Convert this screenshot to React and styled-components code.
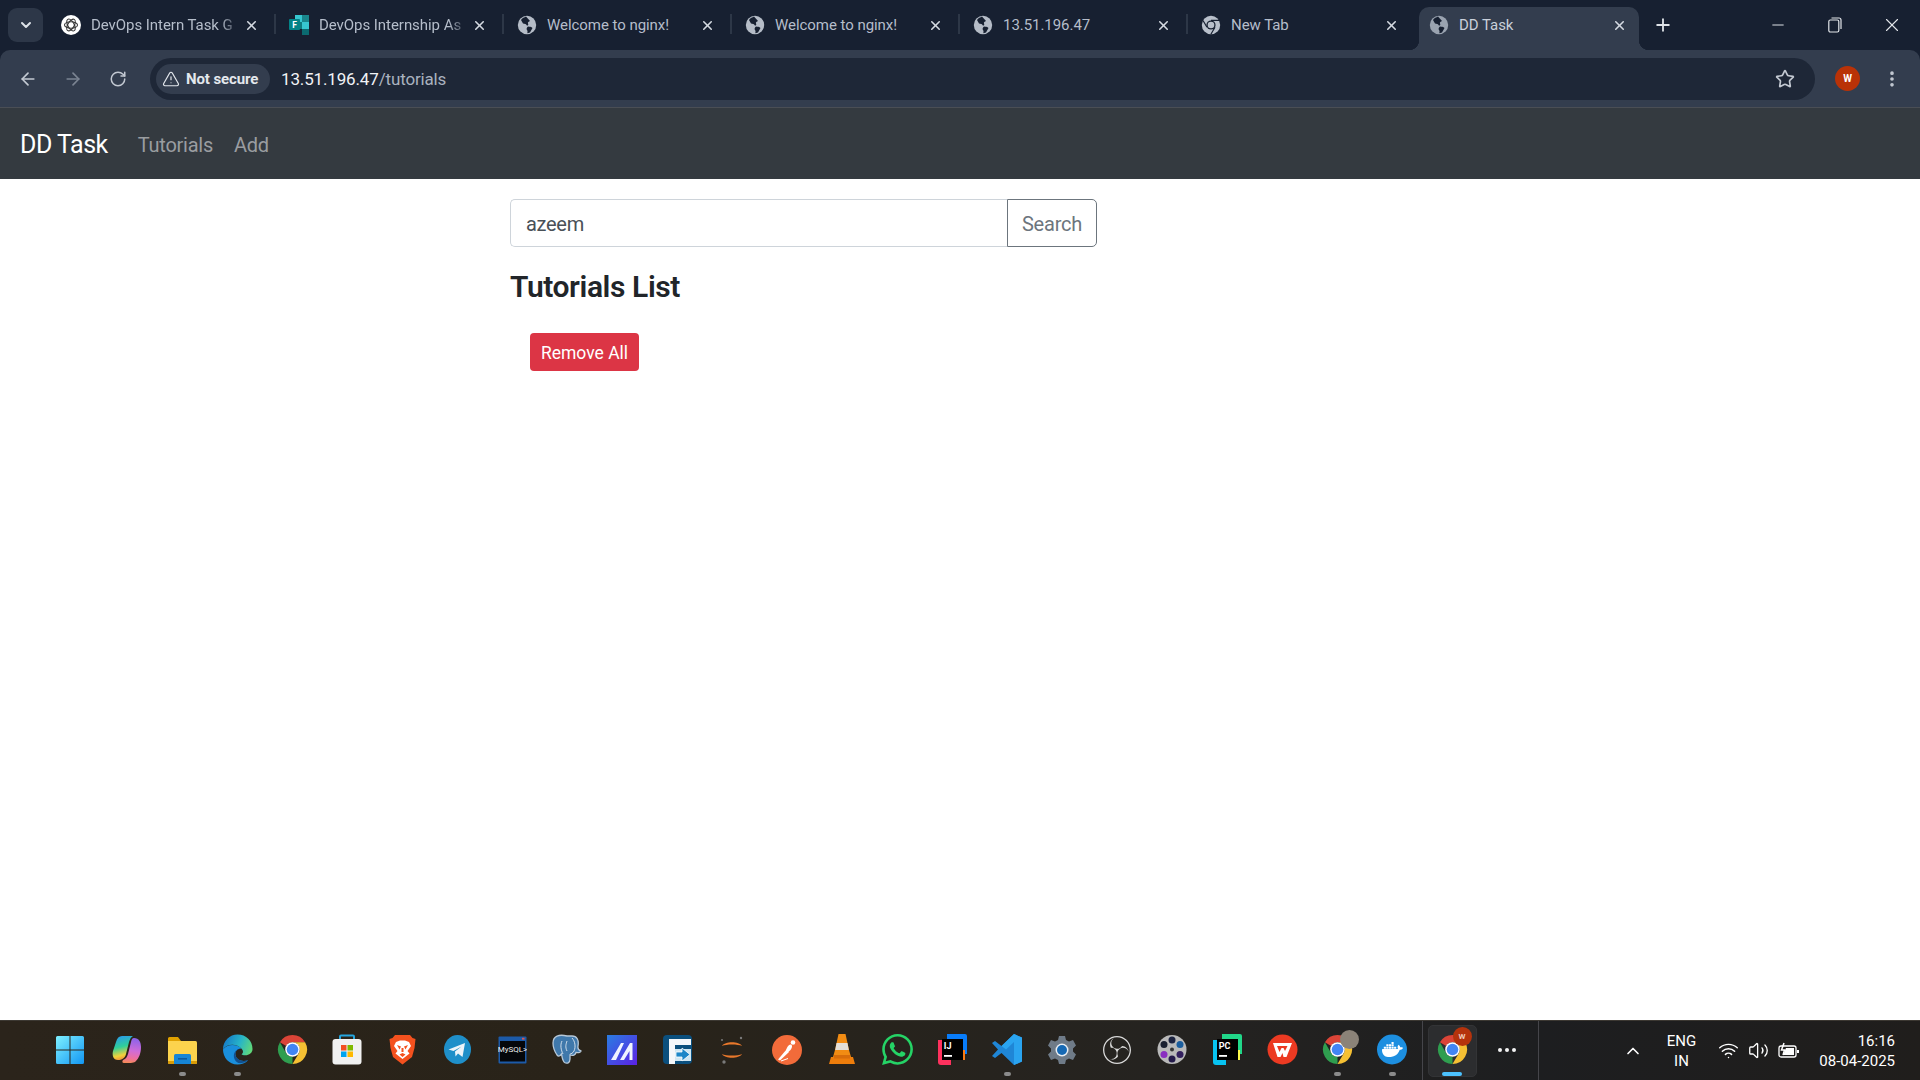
import React from "react";
import styled, { createGlobalStyle } from "styled-components";
import {
  ArrowLeft,
  ArrowRight,
  ChevronDown,
  ChevronUp,
  EllipsisVertical,
  Minus,
  Plus,
  RotateCw,
  Star,
  TriangleAlert,
  Volume2,
  Wifi,
  X,
} from "lucide-react";
import { SiDocker, SiObsstudio, SiWhatsapp } from "react-icons/si";

const GlobalStyle = createGlobalStyle`
  html, body {
    margin: 0;
    height: 100%;
    overflow: hidden;
    background: #fff;
    font-family: "Roboto", "Open Sans", sans-serif;
  }
  #root { height: 100%; }
`;

const Page = styled.div`
  display: flex;
  flex-direction: column;
  height: 1080px;
`;

/* browser chrome */
const ChromeFrame = styled.header`
  background: #172031;
`;
const TabStrip = styled.div`
  display: flex;
  height: 50px;
  padding-left: 8px;
`;
const TabListButton = styled.div`
  display: flex;
  align-items: center;
  justify-content: center;
  width: 35px;
  height: 34px;
  margin-top: 8px;
  border-radius: 9px;
  background: #2d3748;
  color: #dde2e8;
`;
const Tabs = styled.div`
  display: flex;
  gap: 8px;
  margin-left: 8px;
`;
const TabItem = styled.div`
  position: relative;
  display: flex;
  align-items: center;
  box-sizing: border-box;
  width: 220px;
  height: 43px;
  margin-top: 7px;
  padding: 0 12px 7px 10px;
  border-radius: 10px 10px 0 0;
  background: ${(p) => (p.$active ? "#333d4e" : "transparent")};
  color: ${(p) => (p.$active ? "#c9d0da" : "#b5bdca")};

  &::after {
    content: "";
    display: ${(p) => (p.$sep ? "block" : "none")};
    position: absolute;
    right: -5px;
    top: 7px;
    width: 2px;
    height: 20px;
    background: #2d3747;
  }
  ${(p) =>
    p.$active &&
    `
    &::before {
      content: "";
      position: absolute;
      left: -10px;
      right: -10px;
      bottom: 0;
      height: 10px;
      z-index: 0;
      background:
        radial-gradient(circle at 0 0, #172031 10px, #333d4e 10.5px) left / 10px 10px no-repeat,
        radial-gradient(circle at 100% 0, #172031 10px, #333d4e 10.5px) right / 10px 10px no-repeat;
    }
  `}
`;
const TabTitle = styled.span`
  flex: 1;
  min-width: 0;
  margin-left: 10px;
  font-size: 15px;
  letter-spacing: -0.05px;
  white-space: nowrap;
  mask-image: ${(p) =>
    p.$fade ? "linear-gradient(90deg, #000 88%, rgba(0,0,0,.15) 100%)" : "none"};
`;
const TabClose = styled(X)`
  flex: none;
  margin-left: 6px;
  color: #d5dae2;
`;
const NewTab = styled.div`
  display: flex;
  align-items: center;
  width: 24px;
  height: 50px;
  margin-left: 14px;
  color: #dfe3e8;
`;
const WindowControls = styled.div`
  display: flex;
  margin-left: auto;
`;
const WindowButton = styled.div`
  display: flex;
  align-items: center;
  justify-content: center;
  width: 57px;
  height: 50px;
  color: #e3e6ea;
`;
const Toolbar = styled.div`
  display: flex;
  align-items: center;
  box-sizing: border-box;
  height: 58px;
  padding-left: 5px;
  border-bottom: 1px solid #4a4e55;
  border-radius: 10px 10px 0 0;
  background: #333d4e;
`;
const NavButton = styled.div`
  display: flex;
  align-items: center;
  justify-content: center;
  width: 45px;
  color: ${(p) => (p.$off ? "#7b8492" : "#c3c9d2")};
`;
const AddressBar = styled.div`
  display: flex;
  flex: 1;
  align-items: center;
  height: 42px;
  margin: 0 20px 0 10px;
  padding: 0 20px 0 6px;
  border-radius: 21px;
  background: #1e2737;
`;
const SecurityChip = styled.div`
  display: flex;
  align-items: center;
  gap: 6px;
  box-sizing: border-box;
  width: 114px;
  height: 30px;
  padding-left: 6px;
  border-radius: 15px;
  background: #333d4e;
  color: #e4e8ed;
  font-size: 15px;
  font-weight: 700;
  letter-spacing: -0.1px;
  white-space: nowrap;
`;
const Url = styled.div`
  flex: 1;
  margin-left: 11px;
  padding-top: 1px;
  color: #aab2bf;
  font-size: 17px;
  letter-spacing: -0.15px;

  b {
    color: #f1f3f6;
    font-weight: 400;
  }
`;
const Avatar = styled.div`
  display: flex;
  align-items: center;
  justify-content: center;
  width: 25px;
  height: 25px;
  margin-right: 4px;
  border-radius: 50%;
  background: #b93207;
  color: #fff;
  font-size: 10px;
  font-weight: 700;
`;
const MenuButton = styled.div`
  display: flex;
  justify-content: center;
  width: 56px;
  color: #c3c9d2;
`;

/* the page in the tab */
const Navbar = styled.nav`
  display: flex;
  align-items: center;
  box-sizing: border-box;
  height: 71px;
  padding: 2px 0 0 20px;
  background: #343a40;
`;
const Brand = styled.div`
  margin-right: 30px;
  color: #fff;
  font-size: 25px;
  letter-spacing: -0.5px;
`;
const NavLink = styled.div`
  margin-right: 21px;
  color: #9a9da0;
  font-size: 20px;
  letter-spacing: -0.25px;
`;
const Main = styled.main`
  flex: 1;
  padding: 20px 0 0 510px;
  background: #fff;
`;
const SearchRow = styled.div`
  display: flex;
  width: 587px;
  height: 48px;
`;
const SearchInput = styled.div`
  display: flex;
  flex: 1;
  align-items: center;
  padding: 1px 0 0 15px;
  border: 1px solid #ced4da;
  border-right: 0;
  border-radius: 5px 0 0 5px;
  color: #495057;
  font-size: 20px;
  letter-spacing: -0.3px;
`;
const SearchButton = styled.div`
  display: flex;
  align-items: center;
  justify-content: center;
  box-sizing: border-box;
  width: 90px;
  padding-top: 1px;
  border: 1px solid #6c757d;
  border-radius: 0 5px 5px 0;
  color: #6c757d;
  font-size: 20px;
  letter-spacing: -0.2px;
`;
const Heading = styled.h4`
  margin: 22px 0 0;
  color: #212529;
  font-size: 30px;
  line-height: 36px;
  font-weight: 600;
  letter-spacing: -0.4px;
`;
const RemoveAll = styled.div`
  display: flex;
  align-items: center;
  justify-content: center;
  box-sizing: border-box;
  width: 109px;
  height: 38px;
  margin: 28px 0 0 20px;
  padding-top: 1px;
  border-radius: 4px;
  background: #dc3545;
  color: #fff;
  font-size: 17.5px;
`;

/* windows taskbar */
const Taskbar = styled.footer`
  display: flex;
  align-items: stretch;
  box-sizing: border-box;
  height: 60px;
  padding-left: 42px;
  border-top: 1px solid #3c3832;
  background: linear-gradient(90deg, #2b241b 0%, #292319 30%, #252320 60%, #1d1e20 80%, #201e1c 100%);
`;
const IconCell = styled.div`
  position: relative;
  display: flex;
  align-items: center;
  justify-content: center;
  box-sizing: border-box;
  width: ${(p) => (p.$first ? "57.5px" : "55px")};
  padding-right: ${(p) => (p.$first ? "2.5px" : 0)};
  flex: none;
  margin-top: -2px;

  svg {
    position: relative;
    display: block;
  }
`;
const RunDot = styled.span`
  position: absolute;
  left: 50%;
  bottom: 4px;
  width: ${(p) => (p.$active ? "20px" : "7px")};
  height: 4px;
  margin-left: ${(p) => (p.$active ? "-10px" : "-3.5px")};
  border-radius: 2px;
  background: ${(p) => (p.$active ? "#4cc2ff" : "#8b8b8b")};
`;
const ActiveTile = styled.div`
  position: absolute;
  inset: 6px 3px 3px;
  border-radius: 5px;
  background: #2c2d2f;
  border: 1px solid #333436;
`;
const Divider = styled.div`
  flex: none;
  width: 1px;
  background: #45454a;
  margin-left: ${(p) => p.$ml || 0}px;
  margin-right: ${(p) => p.$mr || 0}px;
`;
const Tray = styled.div`
  display: flex;
  flex: 1;
  align-items: center;
  color: #fff;
`;
const TrayIcon = styled.div`
  display: flex;
  justify-content: center;
  width: ${(p) => p.$w}px;
  margin-left: ${(p) => p.$ml || 0}px;
`;
const Lang = styled.div`
  width: 44px;
  margin-left: 17px;
  font-size: 15px;
  line-height: 20px;
  text-align: center;
`;
const Clock = styled.div`
  margin-left: auto;
  margin-right: 25px;
  font-size: 15px;
  line-height: 20px;
  text-align: right;
`;

const Globe = ({ color = "#b5bcc7" }) => (
  <svg width="20" height="20" viewBox="0 0 20 20">
    <circle cx="10" cy="10" r="9.2" fill={color} />
    <path
      d="M9 1.5c-1.5.8-4 1.7-5 3.5l2 3.5c1.5.5 3 .3 3.5 1.5.6 1.3 2.5.3 1.5-1.5-.6-1.2.8-1.8 2-2.5L9 1.5zM11 11.5c1.5.2 3.5.3 4.5 1.5l-2.5 4.5-2.5.8c-.5-1 .7-2-.5-3.3-.9-1-.2-2.5 1-3.5z"
      fill="#172031"
    />
  </svg>
);
const OpenAiIcon = () => (
  <svg width="20" height="20" viewBox="0 0 20 20">
    <circle cx="10" cy="10" r="10" fill="#fff" />
    <g fill="none" stroke="#333" strokeWidth="1.1">
      <ellipse cx="10" cy="10" rx="6.5" ry="3.2" />
      <ellipse cx="10" cy="10" rx="6.5" ry="3.2" transform="rotate(60 10 10)" />
      <ellipse cx="10" cy="10" rx="6.5" ry="3.2" transform="rotate(120 10 10)" />
    </g>
  </svg>
);
const FormsIcon = () => (
  <svg width="20" height="20" viewBox="0 0 20 20">
    <rect x="6" y="0" width="7" height="7" fill="#37c6d0" />
    <rect x="13" y="0" width="7" height="7" fill="#1a868c" />
    <rect x="6" y="7" width="7" height="7" fill="#0f7b7f" />
    <rect x="13" y="7" width="7" height="7" fill="#37c6d0" />
    <rect x="13" y="14" width="7" height="6" fill="#0b6a70" />
    <rect x="0" y="4" width="11" height="11" rx="1" fill="#038387" />
    <text x="5.5" y="13" fill="#fff" fontSize="8.5" fontWeight="700" fontFamily="Roboto" textAnchor="middle">F</text>
  </svg>
);
const ChromeMono = () => (
  <svg width="20" height="20" viewBox="0 0 20 20">
    <circle cx="10" cy="10" r="9.2" fill="#b9c0cb" />
    <circle cx="10" cy="10" r="4.6" fill="#172031" />
    <circle cx="10" cy="10" r="3.3" fill="#b9c0cb" />
    <path d="M10 5.4h8.2M6 12.3L2 5.5M14 12.3l-4.1 7" stroke="#172031" strokeWidth="1.2" />
  </svg>
);

const ChromeLogo = () => (
  <svg width="31" height="31" viewBox="0 0 32 32">
    <path d="M3 8.5A15 15 0 0 1 29 8.5H16A7.5 7.5 0 0 0 9.5 12.3Z" fill="#db4437" />
    <path d="M3 8.5L9.5 19.8A7.5 7.5 0 0 0 16 23.5L16 31A15 15 0 0 1 3 8.5Z" fill="#2f9e4f" />
    <path d="M29 8.5A15 15 0 0 1 16 31L22.5 19.8A7.5 7.5 0 0 0 22.5 12.3 7.5 7.5 0 0 0 16 8.5Z" fill="#f5c033" />
    <circle cx="16" cy="16" r="7.5" fill="#fff" />
    <circle cx="16" cy="16" r="6" fill="#4285f4" />
  </svg>
);
const WindowsLogo = () => (
  <svg width="30" height="30" viewBox="0 0 30 30">
    <defs>
      <linearGradient id="winGrad" x1="0" y1="0" x2="1" y2="1">
        <stop offset="0" stopColor="#7ef0ff" />
        <stop offset="1" stopColor="#1296f3" />
      </linearGradient>
    </defs>
    <path d="M1 2.5A1.5 1.5 0 0 1 2.5 1H14.5V14.5H1ZM15.5 1H27.5A1.5 1.5 0 0 1 29 2.5V14.5H15.5ZM1 15.5H14.5V29H2.5A1.5 1.5 0 0 1 1 27.5ZM15.5 15.5H29V27.5A1.5 1.5 0 0 1 27.5 29H15.5Z" fill="url(#winGrad)" />
  </svg>
);
const CopilotLogo = () => (
  <svg width="30" height="31" viewBox="0 0 30 31">
    <defs>
      <linearGradient id="copA" x1="0.3" y1="0" x2="0.5" y2="1">
        <stop offset="0" stopColor="#2a9be8" />
        <stop offset="0.45" stopColor="#2fcf9a" />
        <stop offset="0.8" stopColor="#f2d23a" />
        <stop offset="1" stopColor="#f08a3c" />
      </linearGradient>
      <linearGradient id="copB" x1="0.5" y1="0" x2="0.4" y2="1">
        <stop offset="0" stopColor="#8a63ea" />
        <stop offset="0.5" stopColor="#cf6cd8" />
        <stop offset="0.8" stopColor="#ee6fa0" />
        <stop offset="1" stopColor="#f48a5a" />
      </linearGradient>
    </defs>
    <path d="M10 2H21C19 3 18 5 17 8L14 20C13 24 10 26 6 26C1 26 0 21 1 17L4 8C5 4 7 2 10 2Z" fill="url(#copA)" />
    <path d="M22 4C27 4 29 8 29 13C29 19 27 24 24 27C22 29 20 29 12 29C10 29 10 27 11 26C14 25 15 23 16 20L19 8C19.500 6 20 4 22 4Z" fill="url(#copB)" />
  </svg>
);
const FolderLogo = () => (
  <svg width="30" height="30" viewBox="0 0 30 30">
    <path d="M1 3.5A1.5 1.5 0 0 1 2.5 2H11l3 4H1Z" fill="#e0a100" />
    <path d="M1 6h27.5A1.5 1.5 0 0 1 30 7.5V27.5A1.5 1.5 0 0 1 28.5 29H2.5A1.5 1.5 0 0 1 1 27.5Z" fill="#fcd34d" />
    <path d="M1 26H30V27.5A1.5 1.5 0 0 1 28.5 29H2.5A1.5 1.5 0 0 1 1 27.5Z" fill="#d99b06" />
    <path d="M7 20.5A1.5 1.5 0 0 1 8.5 19H22.5A1.5 1.5 0 0 1 24 20.5V29H7Z" fill="#1685d6" />
    <rect x="11" y="23" width="9" height="1.6" fill="#0b5aa0" />
  </svg>
);
const EdgeLogo = () => (
  <svg width="31" height="31" viewBox="0 0 32 32">
    <defs>
      <linearGradient id="edgeTop" x1="0" y1="0.3" x2="1" y2="0.6">
        <stop offset="0" stopColor="#1478c8" />
        <stop offset="0.55" stopColor="#27b4c8" />
        <stop offset="1" stopColor="#5fd87a" />
      </linearGradient>
    </defs>
    <path d="M1 16C1 24 7 31.5 16 31.5C20 31.5 24 30 27 27C21 29 15 27 14 22C13 18 16 15 20 15C17 11 6 9 1 16Z" fill="#1a8fdc" />
    <path d="M14 22C15 27 21 29 27 27C24 29.5 20 30.5 17 30C13 28 11 23 13 19C14 17 17 15 20 15C16 15.5 13 18 14 22Z" fill="#12508f" />
    <path d="M1 16C1 7 8 .5 16 .5C25 .5 31.5 7 31.5 15.5C31.5 19.5 28 22 24 22C22 22 20.5 21.5 20 21C22 20 22.5 17.5 20 15C16 10.5 6 9 1 16Z" fill="url(#edgeTop)" />
  </svg>
);
const StoreLogo = () => (
  <svg width="30" height="31" viewBox="0 0 30 31">
    <path d="M8 6V2.5A1 1 0 0 1 9 1.5H21A1 1 0 0 1 22 2.5V6" fill="none" stroke="#24a6df" strokeWidth="2" />
    <rect x="0.5" y="5" width="29" height="25.5" rx="3" fill="#f1f1f1" />
    <rect x="9" y="11" width="5.5" height="5.5" fill="#f25022" />
    <rect x="15.5" y="11" width="5.5" height="5.5" fill="#7fba00" />
    <rect x="9" y="17.5" width="5.5" height="5.5" fill="#00a4ef" />
    <rect x="15.5" y="17.5" width="5.5" height="5.5" fill="#ffb900" />
  </svg>
);
const BraveLogo = () => (
  <svg width="27" height="31" viewBox="0 0 27 31">
    <path d="M6 1h15l2.5 3L26.5 5l-1 9-2.5 9-9.5 7.5L4 23 1.5 14l-1-9L3.5 4Z" fill="#f4511e" />
    <path d="M7 8l4-1.5h5L20 8l2 4-3.5 5 2 2.5-7 5.5-7-5.5 2-2.5L5 12Z" fill="#fff" />
    <path d="M8 11l4 1.5-1.5 3zM19 11l-4 1.5 1.5 3zM10.5 20.5l3-1.5 3 1.5-3 2.5zM12.5 14h2v4h-2z" fill="#f4511e" />
  </svg>
);
const TelegramLogo = () => (
  <svg width="27" height="31" viewBox="0 0 27 31">
    <ellipse cx="13.5" cy="15.5" rx="13.5" ry="14.5" fill="#1f8fc9" />
    <path d="M4.5 15.5L21 9l-2.5 14-4.5-3.5-2.5 3-.5-5 6.5-5-8 4.5z" fill="#eef4f9" />
  </svg>
);
const MysqlLogo = () => (
  <svg width="29" height="28" viewBox="0 0 29 28">
    <rect x="0.5" y="0.5" width="28" height="27" rx="1" fill="#1c5aa8" />
    <rect x="2" y="5" width="25" height="20.5" fill="#05070b" />
    <rect x="24" y="1.8" width="2.5" height="1.8" fill="#e0574c" />
    <text x="14.5" y="15.5" fill="#eee" fontSize="8" fontFamily="Roboto" textAnchor="middle">MySQL&gt;</text>
  </svg>
);
const PostgresLogo = () => (
  <svg width="30" height="31" viewBox="0 0 30 31">
    <path d="M15 2C7 0 1 2 1 9c0 4 2 9 4 12 1.5 2 3 1 4.5-1 .5 3 1 7 3 8.5 2.5 1.5 5.5.5 5.5-3.5v-4c3 1 5.5 0 6-2.5 3 .5 5-.5 5-1.500-2-.5-3.500-2-3-5C27 6 25 2 20 2c-2 0-3.500 0-5 0z" fill="#3f78ab" stroke="#b7c8d8" strokeWidth="1.3" />
    <path d="M10 7c-2 4-1 9 1 13M20 4c3 3 4 9 2 13-1 2-3 3-4 3M15 7c-1 3-2 6 0 10" fill="none" stroke="#dfe8f0" strokeWidth="0.9" />
  </svg>
);
const MxLogo = () => (
  <svg width="30" height="30" viewBox="0 0 30 30">
    <defs>
      <linearGradient id="mxGrad" x1="0" y1="0" x2="1" y2="1">
        <stop offset="0" stopColor="#2a7de1" />
        <stop offset="1" stopColor="#5b21e6" />
      </linearGradient>
    </defs>
    <rect width="30" height="30" fill="url(#mxGrad)" />
    <path d="M4 25L14 8h3L9 25zM13 25L23 8h2.5v17h-3v-9L17 25z" fill="#f0f3ff" />
  </svg>
);
const TransferLogo = () => (
  <svg width="29" height="29" viewBox="0 0 29 29">
    <rect width="29" height="29" rx="4" fill="#0b4f7d" />
    <path d="M6 4H28V10H12V13H6ZM6 13H12V29H6Z" fill="#f4f7fa" />
    <path d="M12 14H28V26H12Z" fill="#cfe6f2" />
    <path d="M13 17H19V13l8 6.5-8 6.500v-4H13Z" fill="#1c86c8" stroke="#fff" strokeWidth="0.8" />
  </svg>
);
const JupyterLogo = () => (
  <svg width="26" height="30" viewBox="0 0 26 30">
    <path d="M3 11C6 6 20 6 23 11 19 9 7 9 3 11zM3 19c3 5 17 5 20 0-4 2-16 2-20 0z" fill="#e9782b" />
    <circle cx="3" cy="5" r="1" fill="#7a7a7a" />
    <circle cx="22" cy="3" r="1.2" fill="#7a7a7a" />
    <circle cx="5" cy="27" r="1.7" fill="#7a7a7a" />
  </svg>
);
const PostmanLogo = () => (
  <svg width="30" height="30" viewBox="0 0 30 30">
    <circle cx="15" cy="15" r="15" fill="#f26b3a" />
    <path d="M6 24.5L14.5 14.5 17 17 8 25.5z" fill="#fff" />
    <path d="M14 15c1-3 2.5-5.500 4.500-5.500 1.500 0 1.800 1.500 1.300 3-.6 1.800-2.300 4-3.800 4.500z" fill="#fff" />
    <circle cx="21" cy="7.5" r="2.3" fill="#fff" />
    <path d="M9 26l7-2.5" stroke="#fff" strokeWidth="1" />
  </svg>
);
const VlcLogo = () => (
  <svg width="26" height="33" viewBox="0 0 26 33">
    <path d="M9.5 1h7L20 17H6Z" fill="#f28c13" />
    <path d="M7.5 10h11l1.3 7H6.2Z" fill="#e4dfd7" />
    <path d="M6 17h14l2 7H4Z" fill="#f28c13" />
    <path d="M2 24h22l2 7H0Z" fill="#ee7d0b" />
    <path d="M5 22h16v3.5H5z" fill="#d86d0a" />
  </svg>
);
const JetLogo = ({ label, colors }) => (
  <svg width="30" height="31" viewBox="0 0 30 31">
    <path d="M10 0H28A2 2 0 0 1 30 2V20H10Z" fill={colors[0]} />
    <path d="M1 6H14V31H4A3 3 0 0 1 1 28Z" fill={colors[1]} />
    <path d="M18 16H28V26H18Z" fill={colors[2]} />
    <rect x="5" y="5" width="21" height="21" fill="#000" />
    <text x="6.8" y="14.5" fill="#fff" fontSize="9" fontWeight="700" fontFamily="Roboto">{label}</text>
    <rect x="7" y="21" width="8" height="1.8" fill="#fff" />
  </svg>
);
const VscodeLogo = () => (
  <svg width="30" height="31" viewBox="0 0 30 31">
    <path d="M22 0l8 3.5v24L22 31 9.5 19 3 24 0 22l6-6.500L0 9l3-2 6.500 5z" fill="#1f86d6" />
    <path d="M22 0l8 3.5v24L22 31V8l-8 7.5-4.500-3.500z" fill="#2aa4f0" />
  </svg>
);
const GearLogo = () => (
  <svg width="30" height="30" viewBox="0 0 30 30">
    <path d="M12 1h6l1 4 3 1.5L26 5l3 5.500-3 3v3l3 3L26 25l-4-1.500L19 25l-1 4h-6l-1-4-3-1.500L4 25l-3-5.500 3-3v-3l-3-3L4 5l4 1.500L11 5Z" fill="#6f7b88" />
    <circle cx="15" cy="15" r="6.5" fill="#e9eef3" />
    <circle cx="15" cy="15" r="5" fill="#1669b4" />
  </svg>
);
const ReelLogo = () => (
  <svg width="30" height="31" viewBox="0 0 30 31">
    <circle cx="15" cy="15.5" r="14.5" fill="#b9b9b9" />
    <circle cx="15" cy="6" r="3.5" fill="#1c2340" />
    <circle cx="23" cy="10.5" r="3.5" fill="#1b5e9e" />
    <circle cx="23" cy="20.5" r="3.5" fill="#33205e" />
    <circle cx="15" cy="25" r="3.5" fill="#241a4a" />
    <circle cx="7" cy="20.5" r="3.5" fill="#8a2fc0" />
    <circle cx="7" cy="10.5" r="3.5" fill="#1a2030" />
    <circle cx="15" cy="15.5" r="2" fill="#333" />
  </svg>
);
const WpsLogo = () => (
  <svg width="31" height="31" viewBox="0 0 31 31">
    <circle cx="15.5" cy="15.5" r="15" fill="#ec3a22" />
    <path d="M6 9h19l-5.500 14h-3l-1-4-2 4h-3Z" fill="#fff" />
    <path d="M10 12l2.500 6 2-4h2l1.500 3 2.500-5z" fill="#ec3a22" />
  </svg>
);
const DockerLogo = () => (
  <svg width="30" height="31" viewBox="0 0 30 31">
    <ellipse cx="15" cy="15.5" rx="15" ry="15" fill="#1d8fe0" />
    <foreignObject x="5" y="5" width="21" height="21">
      <SiDocker size={21} color="#fff" />
    </foreignObject>
  </svg>
);

const Badge = styled.span`
  position: absolute;
  top: ${(p) => p.$top}px;
  left: ${(p) => p.$left}px;
  display: flex;
  align-items: center;
  justify-content: center;
  width: ${(p) => p.$size}px;
  height: ${(p) => p.$size}px;
  border-radius: 50%;
  background: ${(p) => p.$bg};
  color: #eec9b8;
  font-size: 8px;
  font-weight: 700;
`;
const GreenOutline = styled(SiWhatsapp)`
  color: #25d366;
`;
const ObsMark = styled(SiObsstudio)`
  color: #d9d9d9;
`;

const pinned = [
  { key: "win", icon: <WindowsLogo />, first: true },
  { key: "copilot", icon: <CopilotLogo /> },
  { key: "files", icon: <FolderLogo />, dot: true },
  { key: "edge", icon: <EdgeLogo />, dot: true },
  { key: "chrome", icon: <ChromeLogo /> },
  { key: "store", icon: <StoreLogo /> },
  { key: "brave", icon: <BraveLogo /> },
  { key: "telegram", icon: <TelegramLogo /> },
  { key: "mysql", icon: <MysqlLogo /> },
  { key: "postgres", icon: <PostgresLogo /> },
  { key: "mx", icon: <MxLogo /> },
  { key: "transfer", icon: <TransferLogo /> },
  { key: "jupyter", icon: <JupyterLogo /> },
  { key: "postman", icon: <PostmanLogo /> },
  { key: "vlc", icon: <VlcLogo /> },
  { key: "whatsapp", icon: <GreenOutline size={31} /> },
  { key: "idea", icon: <JetLogo label="IJ" colors={["#087cfa", "#fe315d", "#f97a12"]} /> },
  { key: "vscode", icon: <VscodeLogo />, dot: true },
  { key: "gear", icon: <GearLogo /> },
  { key: "obs", icon: <ObsMark size={28} /> },
  { key: "reel", icon: <ReelLogo /> },
  { key: "pycharm", icon: <JetLogo label="PC" colors={["#21d789", "#07c3f2", "#fcf84a"]} /> },
  { key: "wps", icon: <WpsLogo /> },
  {
    key: "chrome2",
    icon: (
      <>
        <ChromeLogo />
        <Badge $top={11} $left={30} $size={19} $bg="#8b8378" />
      </>
    ),
    dot: true,
  },
  { key: "docker", icon: <DockerLogo />, dot: true },
];

const tabs = [
  { title: "DevOps Intern Task G", icon: <OpenAiIcon />, fade: true, sep: true },
  { title: "DevOps Internship As", icon: <FormsIcon />, fade: true, sep: true },
  { title: "Welcome to nginx!", icon: <Globe />, sep: true },
  { title: "Welcome to nginx!", icon: <Globe />, sep: true },
  { title: "13.51.196.47", icon: <Globe />, sep: true },
  { title: "New Tab", icon: <ChromeMono /> },
  { title: "DD Task", icon: <Globe color="#9aa3b0" />, active: true },
];

const App = () => {
  return (
    <Page>
      <GlobalStyle />
      <ChromeFrame>
        <TabStrip>
          <TabListButton>
            <ChevronDown size={16} strokeWidth={3} />
          </TabListButton>
          <Tabs>
            {tabs.map((t, i) => (
              <TabItem key={i} $active={t.active} $sep={t.sep}>
                {t.icon}
                <TabTitle $fade={t.fade}>{t.title}</TabTitle>
                <TabClose size={15} strokeWidth={2.5} />
              </TabItem>
            ))}
          </Tabs>
          <NewTab>
            <Plus size={20} strokeWidth={2.2} />
          </NewTab>
          <WindowControls>
            <WindowButton>
              <Minus size={18} strokeWidth={1.3} />
            </WindowButton>
            <WindowButton>
              <svg width="14" height="16" viewBox="0 0 14 16" fill="none" stroke="currentColor" strokeWidth="1.2">
                <rect x="0.8" y="3" width="10" height="12" rx="1.5" />
                <path d="M3.5 1h7.5A2 2 0 0 1 13 3v9" />
              </svg>
            </WindowButton>
            <WindowButton>
              <X size={22} strokeWidth={1.2} />
            </WindowButton>
          </WindowControls>
        </TabStrip>
        <Toolbar>
          <NavButton>
            <ArrowLeft size={20} strokeWidth={2} />
          </NavButton>
          <NavButton $off>
            <ArrowRight size={20} strokeWidth={2} />
          </NavButton>
          <NavButton>
            <RotateCw size={18} strokeWidth={2} />
          </NavButton>
          <AddressBar>
            <SecurityChip>
              <TriangleAlert size={18} strokeWidth={1.6} />
              Not secure
            </SecurityChip>
            <Url>
              <b>13.51.196.47</b>/tutorials
            </Url>
            <Star size={20} strokeWidth={2} color="#c3c9d2" />
          </AddressBar>
          <Avatar>W</Avatar>
          <MenuButton>
            <EllipsisVertical size={20} strokeWidth={2.4} />
          </MenuButton>
        </Toolbar>
      </ChromeFrame>

      <Navbar>
        <Brand>DD Task</Brand>
        <NavLink>Tutorials</NavLink>
        <NavLink>Add</NavLink>
      </Navbar>
      <Main>
        <SearchRow>
          <SearchInput>azeem</SearchInput>
          <SearchButton>Search</SearchButton>
        </SearchRow>
        <Heading>Tutorials List</Heading>
        <RemoveAll>Remove All</RemoveAll>
      </Main>

      <Taskbar>
        {pinned.map((p) => (
          <IconCell key={p.key} $first={p.first}>
            {p.icon}
            {p.dot && <RunDot />}
          </IconCell>
        ))}
        <Divider $ml={2} $mr={2} />
        <IconCell>
          <ActiveTile />
          <ChromeLogo />
          <Badge $top={8} $left={28} $size={19} $bg="#b5330c">W</Badge>
          <RunDot $active />
        </IconCell>
        <IconCell>
          <svg width="20" height="6" viewBox="0 0 20 6" fill="#f2f2f2">
            <circle cx="3" cy="3" r="2" />
            <circle cx="10" cy="3" r="2" />
            <circle cx="17" cy="3" r="2" />
          </svg>
        </IconCell>
        <Divider $ml={3} />
        <Tray>
          <TrayIcon $w={20} $ml={84}>
            <ChevronUp size={22} strokeWidth={2} />
          </TrayIcon>
          <Lang>
            ENG
            <br />
            IN
          </Lang>
          <TrayIcon $w={24} $ml={13}>
            <Wifi size={21} strokeWidth={1.7} />
          </TrayIcon>
          <TrayIcon $w={24} $ml={6}>
            <Volume2 size={21} strokeWidth={1.5} />
          </TrayIcon>
          <TrayIcon $w={24} $ml={6}>
            <svg width="22" height="18" viewBox="0 0 22 18" fill="none" stroke="#fff" strokeWidth="1.3">
              <rect x="1" y="4" width="17" height="11" rx="2" />
              <path d="M20 8v3" strokeWidth="2" />
              <path d="M6 1L3.5 8h3l-1.5 5" strokeWidth="1.5" />
              <path d="M8 6H16V13H5Z" fill="#fff" stroke="none" />
            </svg>
          </TrayIcon>
          <Clock>
            16:16
            <br />
            08-04-2025
          </Clock>
        </Tray>
      </Taskbar>
    </Page>
  );
};

export default App;
